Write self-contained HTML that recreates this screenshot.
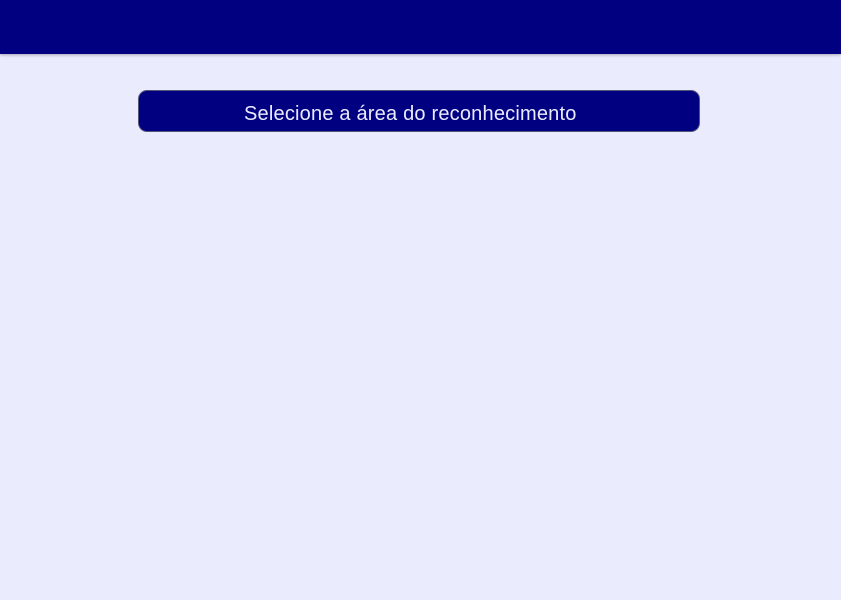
<!DOCTYPE html>
<html><head><style>
body{margin:0;width:841px;height:600px;background:#ebebfe;font-family:"Liberation Sans",sans-serif;overflow:hidden;position:relative}
.h{position:absolute;left:0;top:0;width:841px;height:54px;background:#000080;box-shadow:0 1px 3px rgba(0,0,0,.3)}
.b{position:absolute;left:138px;top:90px;width:562px;height:42px;box-sizing:border-box;background:#000080;border:1px solid #55557a;border-radius:9px;color:#ebebff;font-size:20px;line-height:46px;text-indent:105px;letter-spacing:0.2px}
</style></head><body>
<div class="h"></div>
<div class="b">Selecione a área do reconhecimento</div>
</body></html>
